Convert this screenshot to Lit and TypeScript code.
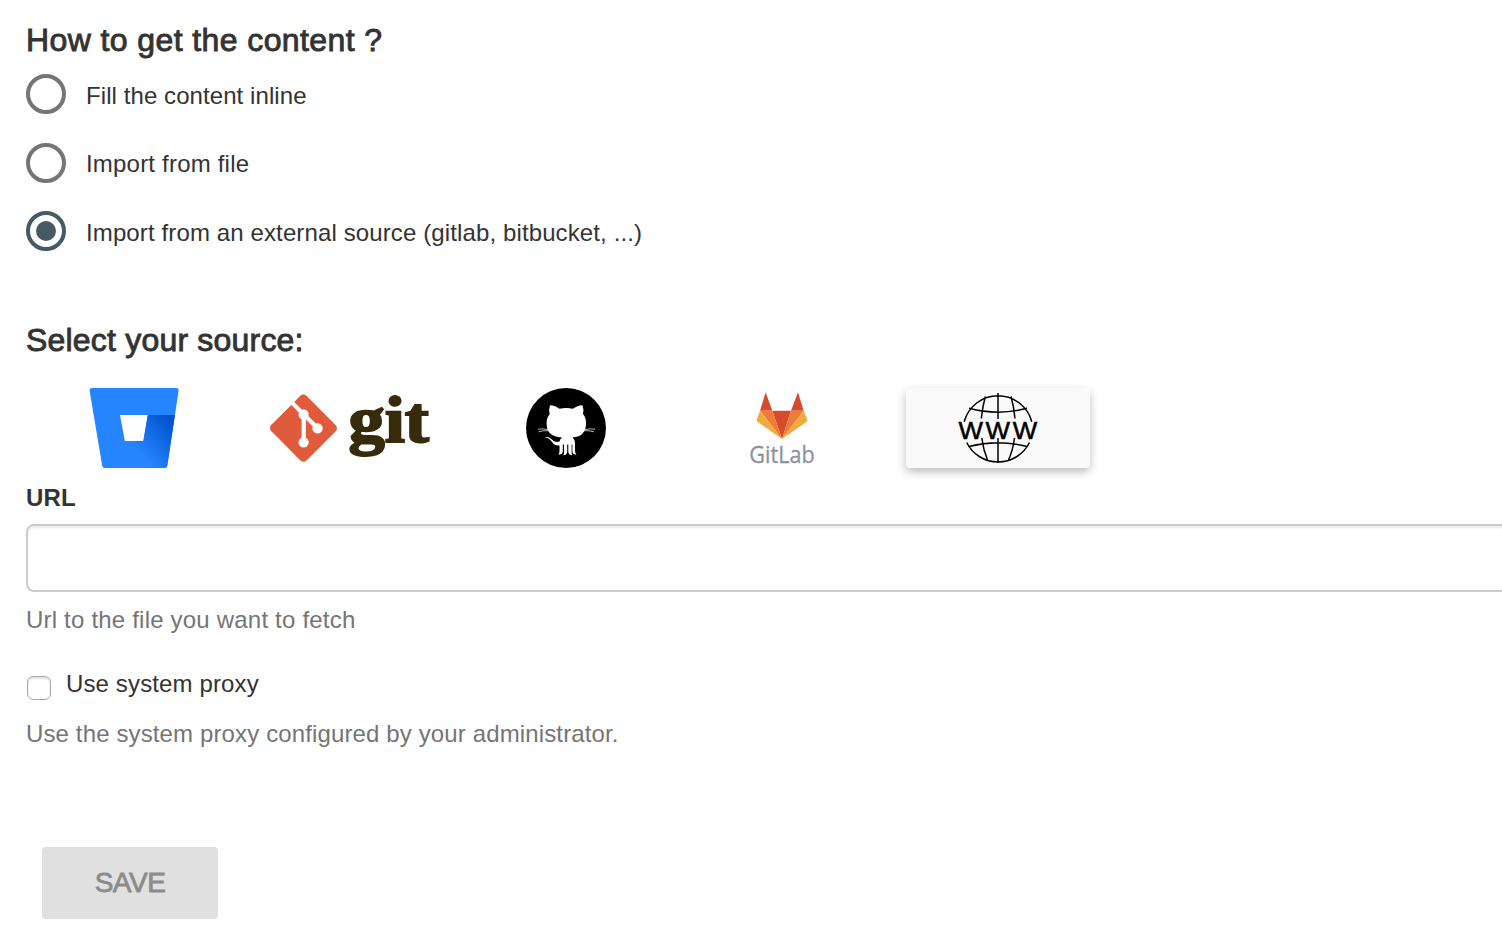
import { LitElement, html, css, svg } from "lit";
import { customElement, state } from "lit/decorators.js";
import { classMap } from "lit/directives/class-map.js";

const bitbucket = svg`
  <defs>
    <linearGradient id="bb" gradientUnits="userSpaceOnUse" x1="133" y1="29" x2="96" y2="62">
      <stop offset="0.1" stop-color="#0052cc"/><stop offset="1" stop-color="#2684ff"/>
    </linearGradient>
  </defs>
  <path fill="#2684ff" fill-rule="evenodd" d="M50 0H134.300Q137 .1 136.600 2.800L125.300 77.800Q124.900 80 122.600 80H63Q60.600 80 60.200 77.800L47.600 2.800Q47.300 .1 50 0ZM78 27L82.800 53H101.400L105.800 27Z"/>
  <path fill="url(#bb)" d="M105.800 27H132.900L125.300 77.800Q124.900 80 122.600 80H63L82.800 53H101.400Z"/>`;

const git = svg`
  <g transform="translate(11.900 6.500) scale(.73)">
    <path fill="#e05a3c" d="M90.156 41.965 50.036 1.848a5.918 5.918 0 0 0-8.372 0l-8.328 8.332 10.566 10.566a7.03 7.03 0 0 1 7.23 1.684 7.034 7.034 0 0 1 1.669 7.277l10.187 10.184a7.028 7.028 0 0 1 7.278 1.672 7.04 7.04 0 0 1 0 9.957 7.05 7.05 0 0 1-9.965 0 7.044 7.044 0 0 1-1.528-7.66l-9.5-9.497V59.36a7.04 7.04 0 0 1 1.86 11.29 7.04 7.04 0 0 1-9.957 0 7.04 7.04 0 0 1 0-9.958 7.06 7.06 0 0 1 2.304-1.539V33.926a7.049 7.049 0 0 1-3.82-9.234L29.242 14.272 1.73 41.777a5.918 5.918 0 0 0 0 8.371L41.852 90.27a5.925 5.925 0 0 0 8.37 0l39.934-39.934a5.925 5.925 0 0 0 0-8.371"/>
  </g>
  <text class="git" x="90.500" y="54.300" textLength="80.500" lengthAdjust="spacingAndGlyphs">git</text>`;

const github = svg`
  <g transform="translate(52 0)">
    <circle cx="40" cy="40" r="40"/>
    <path fill="#fff" d="M24 17.300C27.500 17.400 31 19 33.500 20.700Q40 19.300 47 20.700C49.500 19 53 17.400 56.500 17.300Q58 21.500 57 26Q60.300 29.800 60 35.500C60 43.500 56 49 46.500 49.500Q49 51.500 49 55V63Q49 65.300 50.600 66.400Q46.700 67 46.400 63.500V56.500H45.600V64.500Q45.600 66 46.400 67.200Q42.300 67.200 42.300 63.500V56.500H41.200V63.500Q41.200 67.200 37.200 67.200Q38 66 38 64.500V56.500H36.800V63.500Q36.500 67 32.400 66.400Q33.500 65.300 33.500 63V57.500C26 58.500 26.500 50.500 19 49.300C25 47.500 27 56 33.500 53.600Q34 50.800 36 49.500C25 49 20.800 44 20.600 36Q20.400 30 23.700 26Q22.500 21.500 24 17.300Z"/>
    <path fill="none" stroke="#fff" stroke-width=".7" d="M12 41.200Q17 40.400 22 41.600M12.500 43.800Q17 42.300 22 42.700M69 41.200Q63 40.400 59 41.600M68 43.800Q63 42.300 58 42.700"/>
  </g>`;

const gitlab = svg`
  <g transform="translate(50 -8) scale(.33333)">
    <path fill="#d54c2c" d="M77 37L97 92H60ZM174 37L191 92H153ZM97 92H153L126 177Z"/>
    <path fill="#ee7b36" d="M60 92H97L126 177ZM191 92H153L126 177Z"/>
    <path fill="#f0aa3f" d="M60 92L50 119Q49 123 52 125L126 177ZM191 92L202 119Q203 123 200 125L126 177Z"/>
  </g>
  <text class="gitlab" x="59.300" y="75" textLength="65.300" lengthAdjust="spacingAndGlyphs">GitLab</text>`;

const www = svg`
  <path fill="none" stroke="#000" stroke-width="1.500" d="M58.200 33.700A35 35 0 0 1 125.800 33.700M60.700 54.500A35 35 0 0 0 123.500 54.500M92 5V31M92 50V75M79.300 8.500Q76.500 19 75.300 30.500M105 8.500Q108 19 109 30.500M75.800 50Q77.300 62 81.500 72M108.500 50Q107 62 102.500 72M63 20.300Q92 28 121 20.300M63 58.500Q92 51 121 58.500"/>
  <text class="www" transform="translate(52.400 50.700) scale(1.08 1)">WWW</text>`;

const sources = [
  { id: "bitbucket", logo: bitbucket },
  { id: "git", logo: git },
  { id: "github", logo: github },
  { id: "gitlab", logo: gitlab },
  { id: "http", logo: www },
];

const modes = ["Fill the content inline", "Import from file", "Import from an external source (gitlab, bitbucket, ...)"];

@customElement("app-root")
export class AppRoot extends LitElement {
  @state() mode = 2;
  @state() source = "http";

  static styles = css`
    :host { display: block; box-sizing: border-box; height: 952px; overflow: hidden; padding: 20px 0 0 26px; background: #fff; color: #333; font: 24px/32px "Liberation Sans", Arial, sans-serif; letter-spacing: .13px; }
    h3 { margin: 0; font-size: 32px; line-height: 40px; font-weight: 400; letter-spacing: .4px; -webkit-text-stroke: .9px #333; }
    h3.second { letter-spacing: .2px; }
    .modes { display: grid; gap: 28.500px; margin: 14px 0 69px; }
    .mode { display: flex; gap: 20px; height: 40px; cursor: pointer; }
    .mode span { line-height: 43px; letter-spacing: .08px; }
    .mode:nth-child(2) span { line-height: 42px; letter-spacing: .2px; }
    .mode:nth-child(3) span { letter-spacing: .12px; }
    .radio { box-sizing: border-box; width: 40px; height: 40px; border: 4px solid #757575; border-radius: 50%; display: grid; place-items: center; }
    .on .radio { border-color: #455a64; }
    .on .radio::after { content: ""; width: 20px; height: 20px; border-radius: 50%; background: #455a64; }
    .sources { display: flex; gap: 32px; margin: 28px 0 14px 16px; }
    .source { width: 184px; height: 80px; border-radius: 4px; }
    .source svg { display: block; width: 184px; height: 80px; overflow: visible; }
    .picked { background: #fafafa; box-shadow: 0 4px 10px rgba(0,0,0,.26); }
    .git { font: 700 65.500px "Liberation Serif", serif; fill: #362c0c; stroke: #362c0c; stroke-width: 2px; letter-spacing: 0; }
    .gitlab { font: 23px "Open Sans", sans-serif; fill: #8c929d; stroke: #8c929d; stroke-width: .3px; letter-spacing: 0; }
    .www { font: 24px "Liberation Sans", sans-serif; letter-spacing: 2.500px; stroke: #000; stroke-width: .5px; }
    .label { display: block; font-weight: 700; }
    .input { display: block; box-sizing: border-box; width: 1600px; height: 68px; margin: 10px 0 12px; border: 2px solid #ccc; border-radius: 8px; padding: 12px 24px; font: inherit; background: #fff; box-shadow: inset 0 2px 2px rgba(0,0,0,.075); outline: 0; }
    .help { margin: 0; color: #757575; }
    .input + .help { letter-spacing: .2px; }
    .proxy { display: flex; gap: 15px; margin: 32px 0 18px; padding-left: 1px; }
    .check { appearance: none; box-sizing: border-box; width: 24px; height: 24px; margin: 8px 0 0; border: 1.500px solid #aaa; border-radius: 6px; box-shadow: inset 0 2px 2px rgba(0,0,0,.12); }
    .save { display: block; width: 176px; height: 72px; margin: 97px 0 0 16px; padding: 0; border: 0; border-radius: 4px; background: #e0e0e0; color: #8b8b8b; font: 28px/72px "Liberation Sans", sans-serif; letter-spacing: -.5px; -webkit-text-stroke: .8px #8b8b8b; }
  `;

  render() {
    return html`
      <h3>How to get the content ?</h3>
      <div class="modes">
        ${modes.map((text, i) => html`
          <div class=${classMap({ mode: true, on: this.mode === i })} @click=${() => (this.mode = i)}>
            <div class="radio"></div><span>${text}</span>
          </div>`)}
      </div>
      <h3 class="second">Select your source:</h3>
      <div class="sources">
        ${sources.map((s) => html`
          <div class=${classMap({ source: true, picked: this.source === s.id })} @click=${() => (this.source = s.id)}>
            <svg viewBox="0 0 184 80">${s.logo}</svg>
          </div>`)}
      </div>
      <label class="label" for="url">URL</label>
      <input class="input" id="url" type="text" />
      <p class="help">Url to the file you want to fetch</p>
      <label class="proxy"><input class="check" type="checkbox" /><span>Use system proxy</span></label>
      <p class="help">Use the system proxy configured by your administrator.</p>
      <button class="save" disabled>SAVE</button>
    `;
  }
}
